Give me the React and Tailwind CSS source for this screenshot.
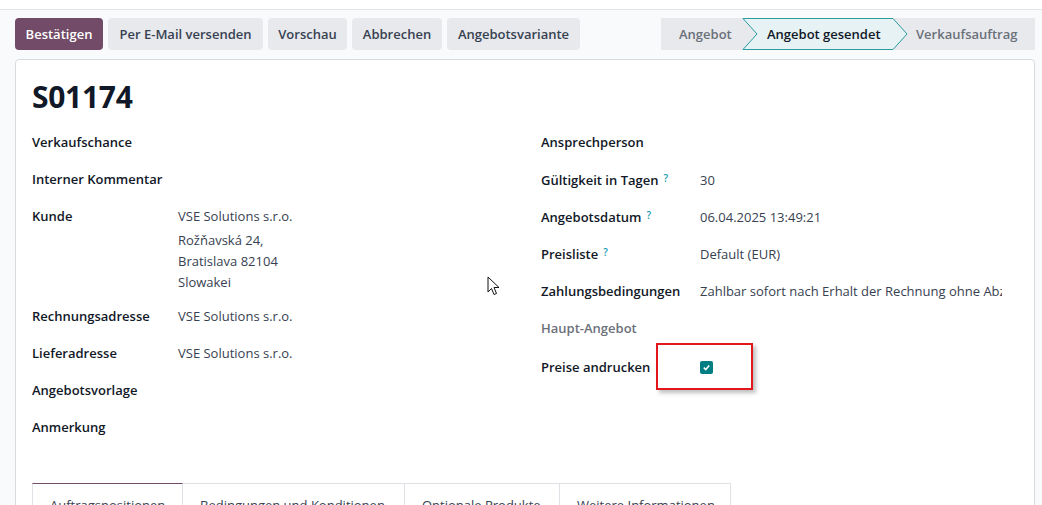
import React from "react";

function Q() {
  return (
    <sup className="ml-[5px] text-[10px] font-semibold text-[#1a9bb3] relative top-[-3px]">?</sup>
  );
}

function Row({ label, children, h = "h-[37px]", labelW, q, muted, extra = "" }) {
  return (
    <div className={`flex ${h} pt-[8px] ${extra}`}>
      <div
        className={`${labelW} shrink-0 font-semibold leading-[21px] ${
          muted ? "text-[#6c7079]" : "text-[#111827]"
        }`}
      >
        {label}
        {q && <Q />}
      </div>
      <div className="flex-1 min-w-0 leading-[21px] text-[#374151]">{children}</div>
    </div>
  );
}

export default function App() {
  const btn =
    "h-[32px] pt-[2px] rounded-[4px] bg-[#e7e9ed] text-[#374151] font-semibold text-[13px] flex items-center justify-center";
  return (
    <div className="w-[1042px] h-[505px] overflow-hidden bg-[#f9fafb] relative font-['Open_Sans',sans-serif] text-[13px]">
      <div className="h-[10px] bg-white border-b border-[#e3e5e8]" />
      <div className="flex pl-[15px] pr-[7px] pt-[8px]">
        <div className="flex gap-[5px]">
          <button className="h-[32px] pt-[2px] w-[88px] rounded-[4px] bg-[#714b67] text-white font-semibold text-[13px]">
            Bestätigen
          </button>
          <button className={`${btn} w-[155px]`}>Per E-Mail versenden</button>
          <button className={`${btn} w-[79px]`}>Vorschau</button>
          <button className={`${btn} w-[90px]`}>Abbrechen</button>
          <button className={`${btn} w-[133px]`}>Angebotsvariante</button>
        </div>
        <div className="ml-auto relative w-[374px] h-[32px] pt-[2px] bg-[#e7e9ed] flex items-center">
          <svg className="absolute left-0 top-0" width="374" height="32" viewBox="0 0 374 32">
            <polygon
              points="82,0.5 232,0.5 246,16 232,31.5 82,31.5 96,16"
              fill="#e6f2f3"
              stroke="#2a9ba0"
              strokeWidth="1"
            />
          </svg>
          <span className="relative w-[106px] pl-[18px] font-semibold text-[#6b7079]">Angebot</span>
          <span className="relative w-[149px] font-semibold text-[#111827]">Angebot gesendet</span>
          <span className="relative font-semibold text-[#6b7079]">Verkaufsauftrag</span>
        </div>
      </div>

      <div className="ml-[15px] mr-[7px] mt-[9px] h-[500px] bg-white border border-[#d8dadd] rounded-t-[4px] px-[16px] pt-[17px]">
        <div className="h-[40px] leading-[40px] text-[30px] font-bold text-[#111827] tracking-[-0.3px]">
          S01174
        </div>
        <div className="flex mt-[7px]">
          <div className="w-[509px] shrink-0">
            <Row label="Verkaufschance" labelW="w-[146px]" />
            <Row label="Interner Kommentar" labelW="w-[146px]" />
            <Row label="Kunde" labelW="w-[146px]" h="h-[100px]">
              <div>VSE Solutions s.r.o.</div>
              <div className="mt-[3px]">Rožňavská 24,</div>
              <div>Bratislava 82104</div>
              <div>Slowakei</div>
            </Row>
            <Row label="Rechnungsadresse" labelW="w-[146px]">
              VSE Solutions s.r.o.
            </Row>
            <Row label="Lieferadresse" labelW="w-[146px]">
              VSE Solutions s.r.o.
            </Row>
            <Row label="Angebotsvorlage" labelW="w-[146px]" />
            <Row label="Anmerkung" labelW="w-[146px]" />
          </div>
          <div className="w-[462px] shrink-0">
            <Row label="Ansprechperson" labelW="w-[159px]" h="h-[38px]" />
            <Row label="Gültigkeit in Tagen" labelW="w-[159px]" q>
              30
            </Row>
            <Row label="Angebotsdatum" labelW="w-[159px]" q>
              06.04.2025 13:49:21
            </Row>
            <Row label="Preisliste" labelW="w-[159px]" q>
              Default (EUR)
            </Row>
            <Row label="Zahlungsbedingungen" labelW="w-[159px]">
              <div className="w-[302px] overflow-hidden whitespace-nowrap">
                Zahlbar sofort nach Erhalt der Rechnung ohne Abzug
              </div>
            </Row>
            <Row label="Haupt-Angebot" labelW="w-[159px]" h="h-[39px]" muted />
            <Row label="Preise andrucken" labelW="w-[159px]">
              <div className="h-[21px] flex items-center">
                <span className="w-[13px] h-[13px] rounded-[2px] bg-[#017e84] flex items-center justify-center">
                  <svg width="9" height="9" viewBox="0 0 10 10">
                    <path d="M2 5.2 L4.2 7.2 L8 2.8" fill="none" stroke="white" strokeWidth="1.8" />
                  </svg>
                </span>
              </div>
            </Row>
          </div>
        </div>

        <div className="flex mt-[37px]">
          <div className="w-[151px] h-[40px] border border-[#dee2e6] border-t-[#714b67] border-b-0 pl-[17px] pt-[12px] text-[#374151]">
            Auftragspositionen
          </div>
          <div className="w-[222px] h-[40px] border border-l-0 border-[#dee2e6] pl-[17px] pt-[12px] text-[#374151]">
            Bedingungen und Konditionen
          </div>
          <div className="w-[155px] h-[40px] border border-l-0 border-[#dee2e6] pl-[17px] pt-[12px] text-[#374151]">
            Optionale Produkte
          </div>
          <div className="w-[171px] h-[40px] border border-l-0 border-[#dee2e6] pl-[17px] pt-[12px] text-[#374151]">
            Weitere Informationen
          </div>
        </div>
      </div>

      <div className="absolute left-[656px] top-[343px] w-[97px] h-[47px] border-2 border-[#e3161b] shadow-[3px_3px_4px_rgba(0,0,0,0.25)]" />

      <svg className="absolute left-[487px] top-[276px]" width="14" height="21" viewBox="0 0 14 21">
        <path
          d="M1 1 L1 16 L4.5 12.5 L7 18.5 L9.5 17.5 L7 11.5 L12 11.5 Z"
          fill="white"
          stroke="#111"
          strokeWidth="1"
          strokeLinejoin="round"
        />
      </svg>
    </div>
  );
}
